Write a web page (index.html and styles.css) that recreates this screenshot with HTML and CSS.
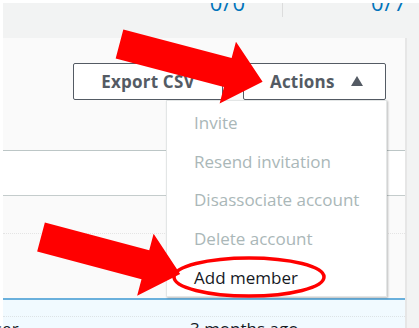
FILE: index.html
```html
<!DOCTYPE html>
<html lang="en">
<head>
<meta charset="utf-8">
<title>Members</title>
<link rel="stylesheet" href="styles.css">
</head>
<body>
<div class="frame">
  <div class="stats">
    <div class="stat stat-first"><span class="stat-value">0/0</span></div>
    <div class="stat stat-second"><span class="stat-value">0/7</span></div>
  </div>
  <div class="panel">
    <div class="toolbar">
      <button class="btn">Export CSV</button>
      <button class="btn btn-actions">Actions <span class="caret"></span></button>
    </div>
    <div class="table">
      <div class="row row-a"></div>
      <div class="row row-b"></div>
      <div class="row row-c"></div>
      <div class="row row-d"></div>
      <div class="row row-selected">
        <span class="cell-name">ser</span>
        <span class="cell-time">3 months ago</span>
      </div>
    </div>
    <ul class="menu">
      <li class="menu-item disabled">Invite</li>
      <li class="menu-item disabled">Resend invitation</li>
      <li class="menu-item disabled">Disassociate account</li>
      <li class="menu-item disabled">Delete account</li>
      <li class="menu-item">Add member</li>
    </ul>
  </div>
</div>
<svg class="overlay" width="419" height="328" viewBox="0 0 419 328">
  <g fill="#ff0000">
    <polygon transform="translate(119.5 44) rotate(14.8)" points="0,-15 112,-15 112,-32 148,0 112,32 112,15 0,15"/>
    <polygon transform="translate(41 237) rotate(14.9)" points="0,-15 108,-15 108,-32 144,0 108,32 108,15 0,15"/>
  </g>
  <ellipse cx="249" cy="277" rx="75" ry="19" fill="none" stroke="#ff0000" stroke-width="3.5"/>
</svg>
</body>
</html>
```

FILE: styles.css
```css
* { box-sizing: border-box; }
html, body {
  margin: 0;
  padding: 0;
}
body {
  width: 419px;
  height: 328px;
  overflow: hidden;
  background: #f2f3f3;
  font-family: "Open Sans", "Noto Sans", sans-serif;
  position: relative;
}
.frame {
  border-top: 3px solid #ffffff;
  border-left: 3px solid #ffffff;
  height: 328px;
  display: flex;
  flex-direction: column;
}
.stats {
  height: 35px;
  display: flex;
  flex-shrink: 0;
  overflow: hidden;
}
.stat {
  position: relative;
  height: 35px;
  display: flex;
  justify-content: flex-end;
}
.stat-first {
  width: 280px;
  padding-right: 37px;
}
.stat-first::after {
  content: "";
  position: absolute;
  right: 0;
  top: 0;
  width: 1px;
  height: 14px;
  background: #dcdcdc;
}
.stat-second {
  width: 115px;
  padding-right: 0;
  padding-left: 88px;
  justify-content: flex-start;
}
.stat-value {
  color: #0073bb;
  font-size: 22px;
  line-height: 22px;
  margin-top: -12px;
  letter-spacing: 1px;
}
.panel {
  width: 404px;
  flex: 1;
  background: #fafafa;
  border-right: 2px solid #e6e6e6;
  position: relative;
  display: flex;
  flex-direction: column;
}
.toolbar {
  display: flex;
  justify-content: flex-end;
  gap: 20px;
  padding: 25px 19px 0 0;
  height: 62px;
  flex-shrink: 0;
}
.btn {
  height: 37px;
  border: 1px solid #545b64;
  border-radius: 2px;
  background: #ffffff;
  color: #545b64;
  font-family: "Open Sans", "Noto Sans", sans-serif;
  font-weight: 700;
  font-size: 17px;
  letter-spacing: 0.2px;
  padding: 0;
  width: 150px;
  display: flex;
  align-items: center;
  justify-content: center;
}
.btn-actions {
  width: 143px;
  justify-content: flex-start;
  padding-left: 26px;
  gap: 16px;
}
.caret {
  width: 0;
  height: 0;
  border-left: 6.5px solid transparent;
  border-right: 6.5px solid transparent;
  border-bottom: 10px solid #545b64;
  margin-top: -2px;
}
.table {
  flex: 1;
  display: flex;
  flex-direction: column;
}
.row {
  flex-shrink: 0;
}
.row-a {
  height: 51px;
  border-bottom: 1px solid #bcc6c6;
}
.row-b {
  height: 45px;
  background: #ffffff;
  border-bottom: 1px solid #c4cccc;
}
.row-c {
  height: 38px;
  border-bottom: 1px dotted #e4e4e4;
}
.row-d {
  height: 64px;
}
.row-selected {
  flex: 1;
  background: #f1faff;
  border-top: 2px solid #6ab0dc;
  position: relative;
  font-size: 17px;
  color: #16191f;
}
.row-selected::before {
  content: "";
  position: absolute;
  left: 0;
  right: 0;
  top: 16px;
  border-top: 1px dotted #dde3e6;
}
.cell-name {
  position: absolute;
  left: -9px;
  top: 17px;
}
.cell-time {
  position: absolute;
  left: 187px;
  top: 17px;
}
.menu {
  position: absolute;
  left: 163px;
  top: 62px;
  width: 221px;
  height: 197px;
  margin: 0;
  padding: 2px 0 1px;
  list-style: none;
  background: #ffffff;
  border: 1px solid #e3e6e6;
  box-shadow: 1px 1px 2px rgba(0, 0, 0, 0.25);
}
.menu-item {
  height: 38.8px;
  display: flex;
  align-items: center;
  padding-left: 27px;
  font-size: 17px;
  color: #16191f;
}
.menu-item.disabled {
  color: #aab7b8;
}
.overlay {
  position: absolute;
  left: 0;
  top: 0;
  pointer-events: none;
}
```
